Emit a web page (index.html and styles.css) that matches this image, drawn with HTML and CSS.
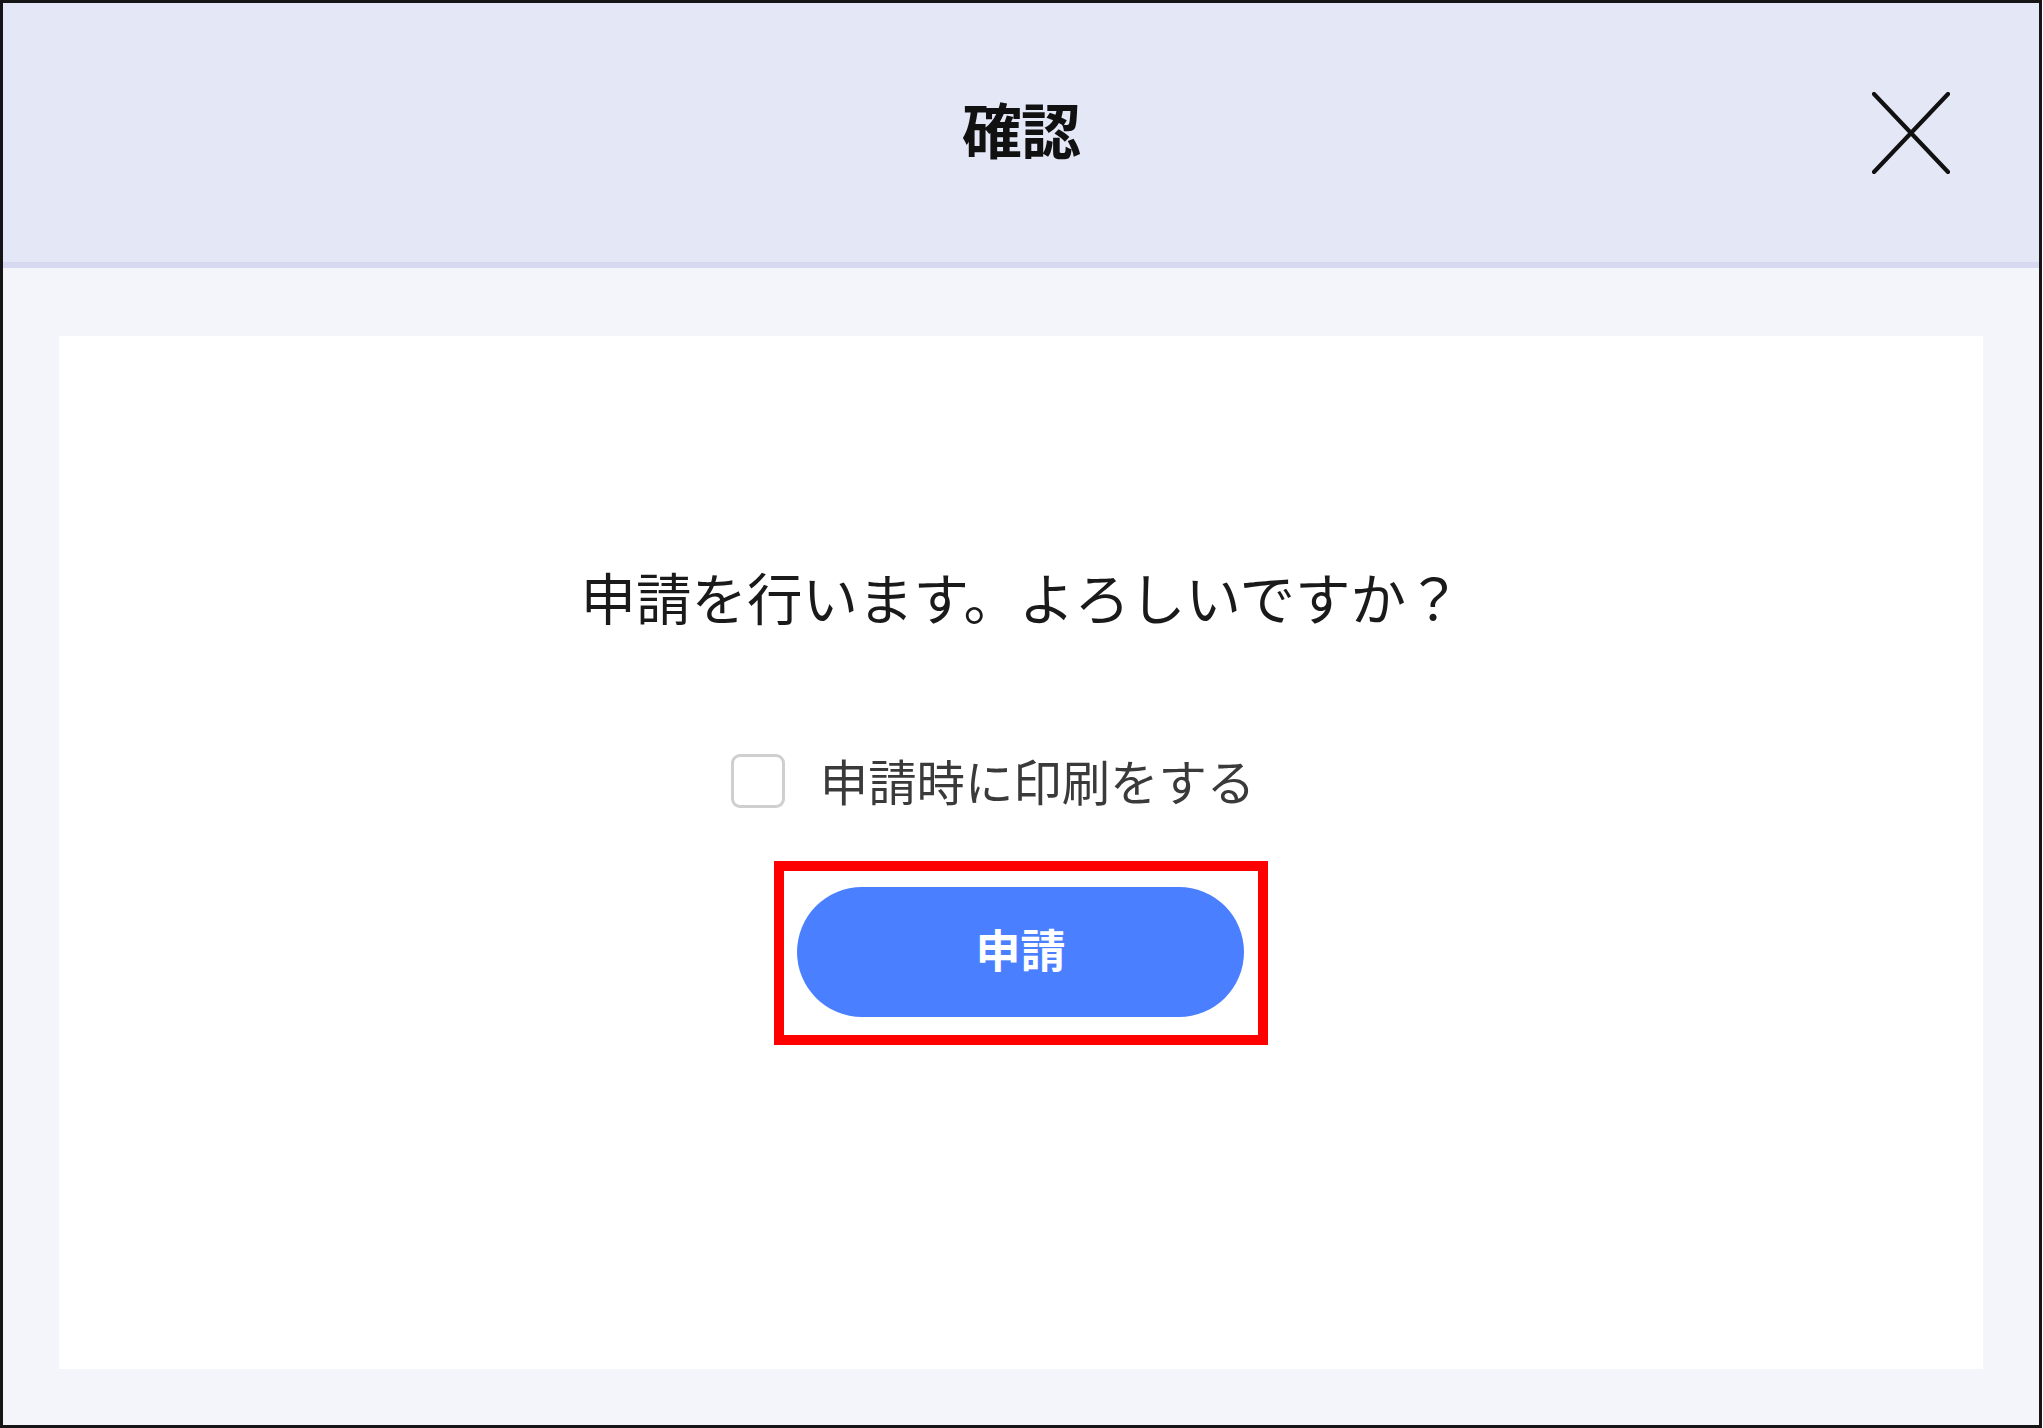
FILE: index.html
```html
<!DOCTYPE html>
<html lang="ja">
<head>
<meta charset="utf-8">
<title>確認</title>
<link rel="stylesheet" href="styles.css">
</head>
<body>
<div class="frame">
  <header class="dialog-header">
    <span class="spacer"></span>
    <h1 class="dialog-title">確認</h1>
    <button class="close-btn" type="button" aria-label="閉じる">
      <svg width="78" height="82" viewBox="0 0 78 82" aria-hidden="true">
        <path d="M2 2 L76 80 M76 2 L2 80" stroke="#111" stroke-width="4.2" stroke-linecap="round" fill="none"/>
      </svg>
    </button>
  </header>
  <main class="dialog-body">
    <section class="card">
      <p class="message">申請を行います。よろしいですか？</p>
      <label class="print-row">
        <span class="checkbox"></span>
        <span class="print-label">申請時に印刷をする</span>
      </label>
      <div class="highlight">
        <button class="submit-btn" type="button">申請</button>
      </div>
    </section>
  </main>
</div>
</body>
</html>
```
FILE: styles.css
```css
html, body {
  margin: 0;
  padding: 0;
  background: #ffffff;
}

body {
  font-family: "Noto Sans CJK JP", "Noto Sans", sans-serif;
}

.frame {
  box-sizing: border-box;
  width: 2042px;
  height: 1428px;
  border: 3px solid #151515;
  display: flex;
  flex-direction: column;
  background: #f4f5fa;
}

.dialog-header {
  height: 259px;
  flex: none;
  background: #e4e7f6;
  border-bottom: 6px solid #d6d9ef;
  display: grid;
  grid-template-columns: 1fr auto 1fr;
  align-items: center;
}

.dialog-title {
  margin: 0;
  padding-bottom: 9px;
  font-size: 60px;
  font-weight: 700;
  line-height: 1;
  color: #111;
  letter-spacing: -1px;
}

.close-btn {
  justify-self: end;
  margin-right: 89px;
  padding: 0;
  border: 0;
  background: transparent;
  width: 78px;
  height: 82px;
  display: flex;
}

.dialog-body {
  flex: 1;
  display: flex;
  padding: 68px 56px 56px;
}

.card {
  flex: 1;
  background: #ffffff;
  display: flex;
  flex-direction: column;
  align-items: center;
  padding-top: 233px;
  box-sizing: border-box;
}

.message {
  margin: 0;
  font-size: 55.5px;
  line-height: 1;
  color: #1a1a1a;
  font-weight: 400;
}

.print-row {
  margin-top: 129px;
  margin-right: 56px;
  display: flex;
  align-items: center;
  gap: 35px;
  height: 54px;
}

.checkbox {
  box-sizing: border-box;
  width: 54px;
  height: 54px;
  border: 3px solid #cfcfcf;
  border-radius: 9px;
  background: #fff;
}

.print-label {
  font-size: 48.4px;
  line-height: 1;
  color: #3a3a3a;
}

.highlight {
  margin-top: 53px;
  border: 10px solid #ff0000;
  padding: 16px 14px 18px 13px;
  display: flex;
}

.submit-btn {
  width: 447px;
  height: 130px;
  border: 0;
  border-radius: 65px;
  background: #4a80ff;
  color: #ffffff;
  font-family: "Noto Sans CJK JP", "Noto Sans", sans-serif;
  font-size: 45px;
  font-weight: 700;
  line-height: 1;
  padding: 0 0 7px;
}
```
